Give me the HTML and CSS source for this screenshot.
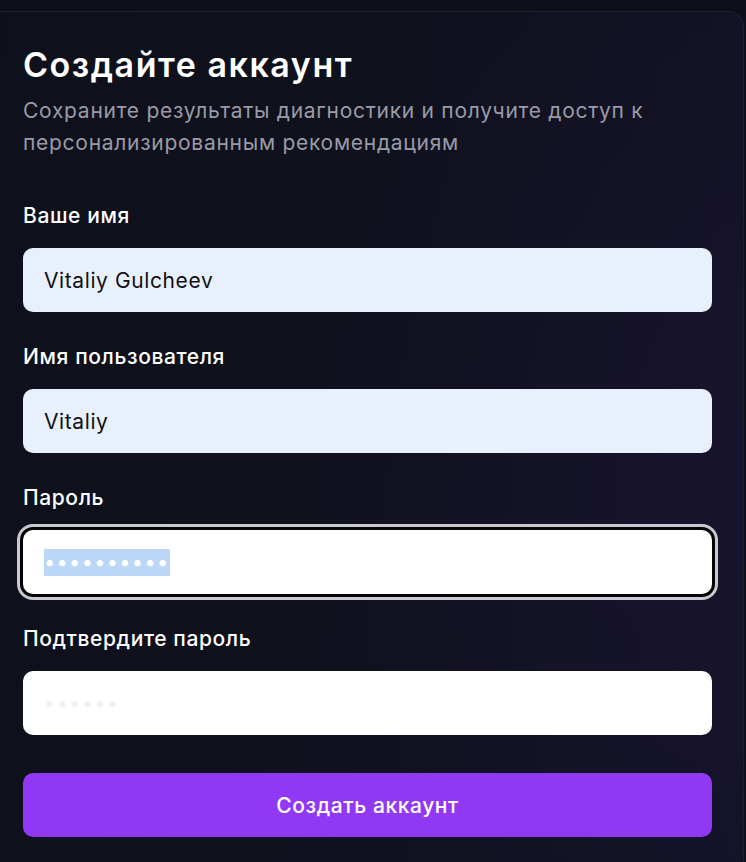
FILE: index.html
```html
<!DOCTYPE html>
<html lang="ru">
<head>
<meta charset="utf-8">
<title>Создайте аккаунт</title>
<link rel="stylesheet" href="styles.css">
</head>
<body>
<div class="page">
  <section class="card">
    <h1 class="title">Создайте аккаунт</h1>
    <p class="subtitle">Сохраните результаты диагностики и получите доступ к персонализированным рекомендациям</p>
    <form class="form">
      <div class="field">
        <label class="label">Ваше имя</label>
        <div class="input autofill">Vitaliy Gulcheev</div>
      </div>
      <div class="field">
        <label class="label">Имя пользователя</label>
        <div class="input autofill">Vitaliy</div>
      </div>
      <div class="field">
        <label class="label">Пароль</label>
        <div class="input focused"><span class="dots selected">••••••••••</span></div>
      </div>
      <div class="field">
        <label class="label">Подтвердите пароль</label>
        <div class="input"><span class="dots faint">••••••</span></div>
      </div>
      <button type="button" class="submit">Создать аккаунт</button>
    </form>
  </section>
</div>
</body>
</html>
```

FILE: styles.css
```css
* { box-sizing: border-box; }
html, body {
  margin: 0;
  padding: 0;
  background: #0d1019;
  font-family: Inter, "Noto Sans", "DejaVu Sans", sans-serif;
  height: 100%;
  overflow: hidden;
}
.page {
  padding-top: 11px;
  padding-right: 2px;
  height: 100%;
}
.card {
  height: 100%;
  border-top: 1px solid #1d202d;
  border-right: 1px solid #1d202d;
  border-top-right-radius: 16px;
  background:
    radial-gradient(ellipse 60% 70% at 100% 55%, rgba(36, 22, 64, 0.3), rgba(36, 22, 64, 0) 100%),
    linear-gradient(100deg, #0e111b 0%, #0f111d 45%, #131327 100%);
  padding: 33px 31px 40px 23px;
}
.title {
  margin: 0;
  font-size: 34px;
  line-height: 40px;
  font-weight: 600;
  color: #ffffff;
  letter-spacing: 1.55px;
}
.subtitle {
  margin: 10px 0 0;
  font-size: 21px;
  line-height: 32px;
  letter-spacing: 0.72px;
  color: #9a9ba6;
}
.form {
  display: flex;
  flex-direction: column;
  margin-top: 43px;
}
.field {
  display: flex;
  flex-direction: column;
  margin-bottom: 31px;
}
.label {
  font-size: 21px;
  line-height: 28px;
  font-weight: 500;
  letter-spacing: 0.6px;
  color: #ffffff;
  margin-bottom: 18px;
}
.input {
  height: 64px;
  border-radius: 10px;
  background: #ffffff;
  padding: 0 21px;
  display: flex;
  align-items: center;
  font-size: 21px;
  letter-spacing: 0.6px;
  color: #111111;
}
.input.autofill {
  background: #e8f0fe;
}
.input.focused {
  box-shadow: 0 0 0 3px #050505, 0 0 0 6px #c9c9cf;
}
.dots {
  font-size: 20px;
  line-height: 27px;
  letter-spacing: 1.3px;
}
.dots.selected {
  background: #bcd6f8;
  color: #ffffff;
}
.dots.faint {
  color: #f1f1f3;
}
.submit {
  margin-top: 7px;
  height: 64px;
  border: none;
  border-radius: 10px;
  background: #9138f4;
  color: #ffffff;
  font-family: Inter, "Noto Sans", sans-serif;
  font-size: 21px;
  font-weight: 500;
  letter-spacing: 0.6px;
  cursor: pointer;
}
```
